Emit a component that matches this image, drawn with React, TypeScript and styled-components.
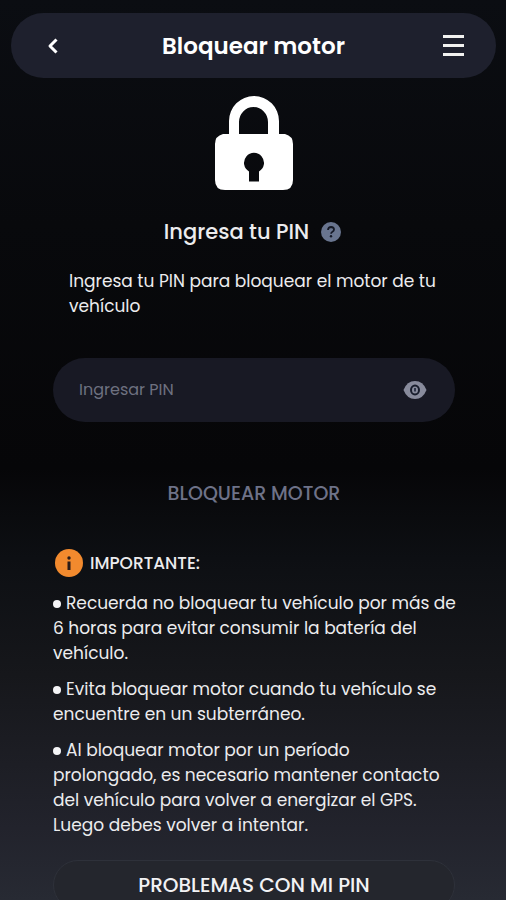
import React, { useState } from "react";
import styled, { createGlobalStyle, css } from "styled-components";

const GlobalStyle = createGlobalStyle`
  *, *::before, *::after { box-sizing: border-box; }
  body {
    margin: 0;
    background: #070709;
    color: #ececee;
    font-family: Poppins, Inter, "Open Sans", sans-serif;
  }
  button, input { font: inherit; color: inherit; }
`;

const Screen = styled.div`
  height: 100vh;
  overflow-y: auto;
  scrollbar-width: none;
  padding: 13px 10px 24px 11px;
  background: linear-gradient(
    180deg,
    #0b0d12 0%,
    #08090c 25%,
    #060608 52%,
    #0d0f13 62%,
    #16171b 75%,
    #22232c 92%,
    #272a33 100%
  );
`;

const Header = styled.header`
  display: grid;
  grid-template-columns: 48px 1fr 48px;
  align-items: center;
  height: 65px;
  padding: 0 18px;
  border-radius: 33px;
  background: #1e202d;
`;

const Title = styled.h1`
  margin: 0;
  text-align: center;
  font-size: 23px;
  line-height: 32px;
  font-weight: 600;
  color: #ffffff;
`;

const IconButton = styled.button`
  display: flex;
  align-items: center;
  justify-content: center;
  height: 48px;
  padding: 0;
  border: 0;
  background: none;
  cursor: pointer;
`;

const Content = styled.main`
  display: flex;
  flex-direction: column;
  padding: 18px 41px 0 42px;
`;

const LockIcon = styled.svg`
  align-self: center;
  width: 80px;
  height: 95px;
`;

const PinHeading = styled.div`
  display: flex;
  align-items: center;
  justify-content: center;
  gap: 12px;
  margin-top: 25px;
  padding-right: 3px;
`;

const Subtitle = styled.h2`
  margin: 0;
  font-size: 21px;
  line-height: 32px;
  font-weight: 500;
`;

const HelpButton = styled(IconButton)`
  width: 20px;
  height: 20px;
`;

const bodyText = css`
  margin: 0;
  font-size: 17px;
  line-height: 25px;
  font-weight: 400;
`;

const Description = styled.label`
  ${bodyText}
  margin-top: 21px;
  padding: 0 16px;
`;

const PinField = styled.div`
  display: flex;
  align-items: center;
  height: 64px;
  margin-top: 39px;
  padding: 0 16px 0 26px;
  border-radius: 32px;
  background: #181924;
`;

const PinInput = styled.input`
  flex: 1;
  min-width: 0;
  padding: 0;
  border: 0;
  outline: 0;
  background: none;
  font-size: 16px;
  line-height: 24px;
  &::placeholder {
    color: #6e7180;
    opacity: 1;
  }
`;

const RevealButton = styled(IconButton)`
  width: 48px;
`;

const ActionButton = styled.button<{ $outlined?: boolean }>`
  height: ${(p) => (p.$outlined ? 50 : 64)}px;
  padding: 0 24px;
  border: 1px solid ${(p) => (p.$outlined ? "#2e313a" : "transparent")};
  border-radius: 32px;
  background: ${(p) => (p.$outlined ? "#24262d" : "none")};
  color: ${(p) => (p.$outlined ? "#f2f2f4" : "#6e7288")};
  font-size: ${(p) => (p.$outlined ? 20 : 19)}px;
  font-weight: 500;
  cursor: pointer;
`;

const LockAction = styled.div`
  display: grid;
  margin-top: 39px;
`;

const Notice = styled.section`
  display: flex;
  flex-direction: column;
  margin-top: 24px;
`;

const NoticeHeading = styled.h3`
  display: flex;
  align-items: center;
  gap: 7px;
  margin: 0 0 14px;
  padding-left: 2px;
  font-size: 17px;
  line-height: 28px;
  font-weight: 500;
`;

const NoticeText = styled.p`
  ${bodyText}
  margin-bottom: 11px;
  white-space: nowrap;
`;

const Bullet = styled.span`
  display: inline-block;
  width: 8px;
  height: 8px;
  margin-right: 5px;
  border-radius: 50%;
  background: #f4f4f6;
  vertical-align: 1px;
`;

const Footer = styled.div`
  display: grid;
  margin-top: 11px;
`;

const notices = [
  ["Recuerda no bloquear tu vehículo por más de", "6 horas para evitar consumir la batería del", "vehículo."],
  ["Evita bloquear motor cuando tu vehículo se", "encuentre en un subterráneo."],
  [
    "Al bloquear motor por un período",
    "prolongado, es necesario mantener contacto",
    "del vehículo para volver a energizar el GPS.",
    "Luego debes volver a intentar.",
  ],
];

export default function App() {
  const [pin, setPin] = useState("");
  const [visible, setVisible] = useState(false);

  return (
    <>
      <GlobalStyle />
      <Screen>
        <Header>
          <IconButton type="button" aria-label="Volver">
            <svg width="12" height="16" viewBox="0 0 12 16" fill="none" stroke="#fff" strokeWidth="3">
              <path d="M9.5 1.5 3 8l6.500 6.500" strokeLinejoin="round" />
            </svg>
          </IconButton>
          <Title>Bloquear motor</Title>
          <IconButton type="button" aria-label="Menú">
            <svg width="22" height="22" viewBox="0 0 22 22" fill="#f2f2f0">
              <path d="M0 0h21v3H0zM0 9h21v3H0zM0 18h21v3H0z" />
            </svg>
          </IconButton>
        </Header>
        <Content>
          <LockIcon viewBox="0 0 80 95" aria-hidden="true">
            <path
              fill="#fff"
              fillRule="evenodd"
              d="M15 38V25a25 25 0 0 1 50 0v13h6q8 2 8 10v36q0 10-10 10H11Q1 94 1 84V48q0-8 8-10ZM25 38h29V26a14.500 15 0 0 0-29 0ZM35 75.500v10h10v-10a10 10 0 1 0-10 0Z"
            />
          </LockIcon>
          <PinHeading>
            <Subtitle>Ingresa tu PIN</Subtitle>
            <HelpButton type="button" aria-label="Ayuda">
              <svg width="20" height="20" viewBox="0 0 20 20" fill="none">
                <circle cx="10" cy="10" r="10" fill="#69758f" />
                <path d="M7 8q.2-3 3.100-3 2.900.1 2.900 2.600 0 1.400-1.500 2.200-1.400.8-1.400 2" stroke="#151926" strokeWidth="1.800" />
                <circle cx="10" cy="14.200" r="1.200" fill="#151926" />
              </svg>
            </HelpButton>
          </PinHeading>
          <Description htmlFor="pin">Ingresa tu PIN para bloquear el motor de tu vehículo</Description>
          <PinField>
            <PinInput
              id="pin"
              type={visible ? "text" : "password"}
              inputMode="numeric"
              placeholder="Ingresar PIN"
              value={pin}
              onChange={(e) => setPin(e.target.value)}
            />
            <RevealButton type="button" aria-label="Mostrar PIN" onClick={() => setVisible(!visible)}>
              <svg width="24" height="20" viewBox="0 0 24 20">
                <path d="M0.500 10Q4 1 12 1t11.500 9Q20 19 12 19T.5 10Z" fill="#888b9c" />
                <ellipse cx="12" cy="10" rx="4" ry="4.500" fill="#888b9c" stroke="#181d2c" strokeWidth="2" />
                <path d="M12 8v3.500" stroke="#30374a" strokeWidth="2" />
              </svg>
            </RevealButton>
          </PinField>
          <LockAction>
            <ActionButton type="button">BLOQUEAR MOTOR</ActionButton>
          </LockAction>
          <Notice>
            <NoticeHeading>
              <svg width="28" height="28" viewBox="0 0 28 28" aria-hidden="true">
                <circle cx="14" cy="14" r="14" fill="#f28a2e" />
                <circle cx="14" cy="9" r="1.700" fill="#2a1b18" />
                <path d="M12.500 12.500h3V21h-3z" fill="#2a1b18" />
              </svg>
              IMPORTANTE:
            </NoticeHeading>
            {notices.map((lines) => (
              <NoticeText key={lines[0]}>
                <Bullet />
                {lines.map((line, i) => (
                  <React.Fragment key={line}>
                    {i > 0 && <br />}
                    {line}
                  </React.Fragment>
                ))}
              </NoticeText>
            ))}
          </Notice>
          <Footer>
            <ActionButton type="button" $outlined>
              PROBLEMAS CON MI PIN
            </ActionButton>
          </Footer>
        </Content>
      </Screen>
    </>
  );
}
